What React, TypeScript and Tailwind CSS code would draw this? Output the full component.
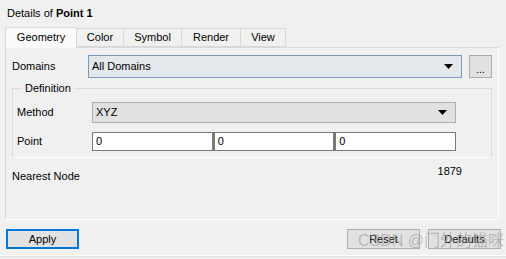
const tabs = ['Geometry', 'Color', 'Symbol', 'Render', 'View']

function Caret() {
  return (
    <svg width="9" height="5" viewBox="0 0 9 5" className="shrink-0">
      <path d="M0 0h9L4.5 5z" fill="#000" />
    </svg>
  )
}

function Combo({ label, tone }: { label: string; tone: 'blue' | 'gray' }) {
  const box =
    tone === 'blue'
      ? 'h-[23px] border-[#7a9cbb] bg-[#e4e7eb]'
      : 'h-[21px] border-[#adadad] bg-[#e1e1e1]'
  return (
    <div className={`flex flex-1 items-center justify-between border pl-[3px] pr-[8px] ${box}`}>
      <span>{label}</span>
      <Caret />
    </div>
  )
}

export default function App() {
  return (
    <div
      className="relative flex h-[259px] w-[506px] flex-col overflow-hidden bg-[#f0f0f0] text-[11px] text-[#000]"
      style={{ fontFamily: '"Liberation Sans", Arial, sans-serif' }}
    >
      {/* Title */}
      <div className="flex h-[28px] items-center px-[7px] pb-[2px] leading-[16px]">
        Details of&nbsp;<span className="font-bold">Point 1</span>
      </div>

      {/* Tabs */}
      <div className="ml-[5px] flex h-[19px] items-end">
        {tabs.map((t, i) =>
          i === 0 ? (
            <div
              key={t}
              className="relative z-10 -mb-px flex h-[21px] w-[72px] items-center justify-center border border-b-0 border-[#d9d9d9] bg-[#f9f9f9] pb-[1px]"
            >
              {t}
            </div>
          ) : (
            <div
              key={t}
              className={`flex h-[19px] items-center justify-center border border-l-0 border-[#d9d9d9] bg-[#f0f0f0] ${
                i === 1 ? 'w-[47px]' : i === 2 ? 'w-[58px]' : i === 3 ? 'w-[59px]' : 'w-[45px]'
              }`}
            >
              {t}
            </div>
          )
        )}
      </div>

      {/* Panel */}
      <div className="mx-[5px] mr-[7px] flex h-[173px] flex-col border border-[#d9d9d9] border-b-white border-r-white px-[6px] pt-[7px]">
        <div className="flex h-[23px] items-center">
          <span className="w-[76px]">Domains</span>
          <Combo label="All Domains" tone="blue" />
          <div className="ml-[7px] flex h-[23px] w-[23px] items-end justify-center border border-[#adadad] bg-[#e1e1e1] pb-[3px] leading-[10px]">
            ...
          </div>
        </div>

        <fieldset className="mt-[2px] border border-[#dcdcdc] border-b-white pb-[6px] pl-[4px] pr-[35px]">
          <legend className="ml-[5px] px-[3px] leading-[16px]">Definition</legend>
          <div className="mt-[6px] flex items-center">
            <span className="w-[75px]">Method</span>
            <Combo label="XYZ" tone="gray" />
          </div>
          <div className="mt-[9px] flex items-center">
            <span className="w-[75px]">Point</span>
            <div className="flex flex-1">
              {['0', '0', '0'].map((v, i) => (
                <div
                  key={i}
                  className={`flex h-[19px] flex-1 items-center border border-[#7a7a7a] bg-white pl-[3px] ${
                    i > 0 ? 'border-l-2' : ''
                  }`}
                >
                  {v}
                </div>
              ))}
            </div>
          </div>
        </fieldset>

        <div className="mt-[10px] flex items-center justify-between pr-[30px] leading-[16px]">
          <span>Nearest Node</span>
          <span className="-mt-[10px]">1879</span>
        </div>
      </div>

      {/* Buttons */}
      <div className="mt-[9px] flex h-[20px] px-[6px] pr-[5px]">
        <div className="flex w-[73px] items-center justify-center border-2 border-[#0078d7] bg-[#e1e1e1]">
          Apply
        </div>
        <div className="ml-auto flex w-[73px] items-center justify-center border border-[#adadad] bg-[#e1e1e1]">
          Reset
        </div>
        <div className="ml-[8px] flex w-[73px] items-center justify-center border border-[#adadad] bg-[#e1e1e1]">
          Defaults
        </div>
      </div>

      <div className="mt-[6px] h-px bg-white" />
      <div className="h-px bg-[#e3e3e3]" />

      {/* watermark */}
      <div
        className="pointer-events-none absolute left-[358px] top-[231px] text-[16px] leading-[20px] text-[#9a9a9a]/60"
        style={{ fontFamily: '"Liberation Sans", "Noto Sans CJK SC", sans-serif' }}
      >
        CSDN @门外的猫咪
      </div>
    </div>
  )
}
